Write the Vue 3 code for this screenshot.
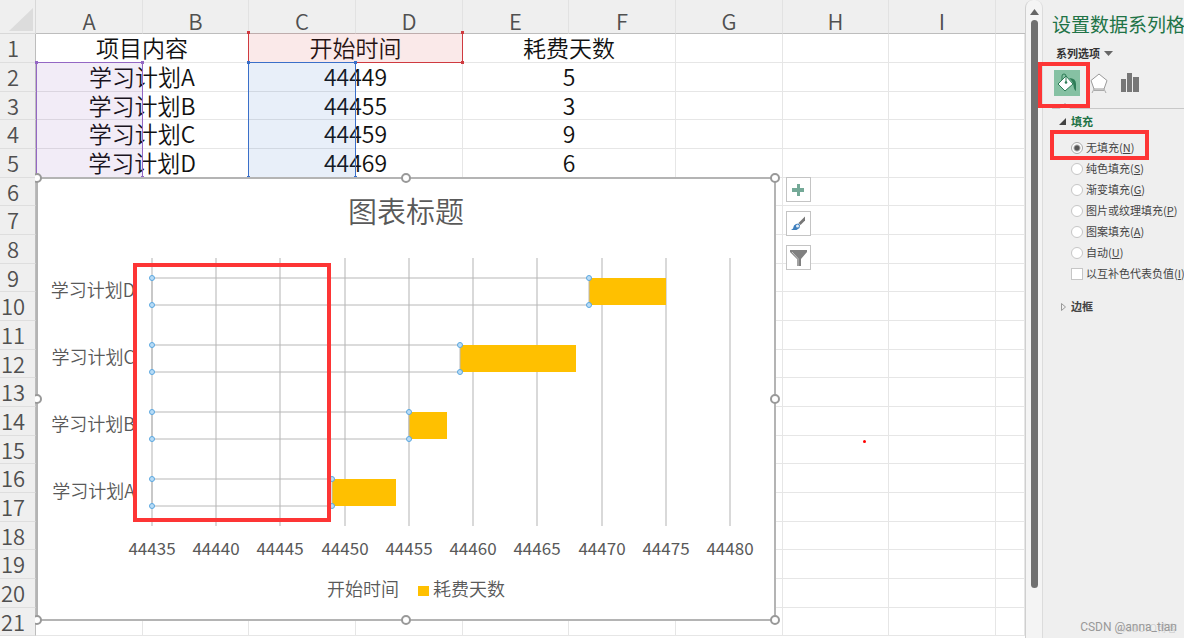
<script setup>
const columns = ['A', 'B', 'C', 'D', 'E', 'F', 'G', 'H', 'I']
const tableRows = [
  ['项目内容', '开始时间', '耗费天数'],
  ['学习计划A', '44449', '5'],
  ['学习计划B', '44455', '3'],
  ['学习计划C', '44459', '9'],
  ['学习计划D', '44469', '6'],
]
const emptyRows = Array.from({ length: 16 }, (_, i) => i + 6)

const origin = 152
const ticks = Array.from({ length: 10 }, (_, i) => 44435 + i * 5)
const xOf = (v) => Math.round(origin + ((v - 44435) * 578) / 45)
const tasks = [
  { name: '学习计划D', start: 44469, days: 6, y: 278 },
  { name: '学习计划C', start: 44459, days: 9, y: 345 },
  { name: '学习计划B', start: 44455, days: 3, y: 412 },
  { name: '学习计划A', start: 44449, days: 5, y: 479 },
]
const handles = [
  [37, 178], [406, 178], [775, 178], [37, 399], [775, 399], [37, 620], [406, 620], [775, 620],
]
const fills = [
  ['无填充', 'N'], ['纯色填充', 'S'], ['渐变填充', 'G'], ['图片或纹理填充', 'P'], ['图案填充', 'A'], ['自动', 'U'],
]
</script>

<template>
  <div class="app">
    <main class="sheet">
      <table>
        <colgroup>
          <col class="c-head" />
          <col v-for="c in columns" :key="c" :class="['B', 'E', 'H'].includes(c) ? 'c-narrow' : 'c-wide'" />
          <col />
        </colgroup>
        <thead>
          <tr>
            <th class="corner"><svg width="35" height="33" aria-hidden="true"><path d="M9 31H33V8Z" fill="#dcdcdc" /></svg></th>
            <th v-for="c in columns" :key="c" scope="col">{{ c }}</th>
            <th></th>
          </tr>
        </thead>
        <tbody>
          <tr v-for="(row, i) in tableRows" :key="i">
            <th scope="row">{{ i + 1 }}</th>
            <td v-for="(cell, j) in row" :key="j" colspan="2">{{ cell }}</td>
            <td></td><td></td><td></td><td></td>
          </tr>
          <tr v-for="n in emptyRows" :key="n">
            <th scope="row">{{ n }}</th>
            <td v-for="k in 10" :key="k"></td>
          </tr>
        </tbody>
      </table>

      <div class="range names"><i></i><i></i><i></i><i></i></div>
      <div class="range header"><i></i><i></i><i></i><i></i></div>
      <div class="range values"><i></i><i></i><i></i><i></i></div>

      <svg class="chart" width="748" height="456" viewBox="35 172 748 456" role="img" aria-label="图表标题">
        <rect x="37" y="178" width="738" height="442" fill="#fff" stroke="#b4b4b4" stroke-width="2" />
        <text class="title" x="406" y="223">图表标题</text>
        <rect v-for="t in ticks" :key="t" :x="xOf(t) - 1" y="258" width="2" height="268" fill="#d9d9d9" />
        <g v-for="t in tasks" :key="t.name">
          <text class="category" x="135" :y="t.y + 19">{{ t.name }}</text>
          <rect :x="xOf(t.start)" :y="t.y" :width="xOf(t.start + t.days) - xOf(t.start)" height="27" fill="#ffc000" />
          <rect class="ghost" :x="origin" :y="t.y" :width="xOf(t.start) - origin" height="27" />
          <g class="dots">
            <circle :cx="origin" :cy="t.y" r="2.5" />
            <circle :cx="origin" :cy="t.y + 27" r="2.5" />
            <circle :cx="xOf(t.start)" :cy="t.y" r="2.5" />
            <circle :cx="xOf(t.start)" :cy="t.y + 27" r="2.5" />
          </g>
        </g>
        <text v-for="t in ticks" :key="t" class="tick" :x="xOf(t)" y="555">{{ t }}</text>
        <text class="legend" x="327" y="596">开始时间</text>
        <rect x="418" y="586" width="11" height="10" fill="#ffc000" />
        <text class="legend" x="433" y="596">耗费天数</text>
        <circle v-for="(h, i) in handles" :key="i" :cx="h[0]" :cy="h[1]" r="4" fill="#fff" stroke="#999" stroke-width="2" />
        <rect x="135" y="265" width="194" height="255" fill="none" stroke="#fd3535" stroke-width="4" />
      </svg>

      <div class="chart-tools">
        <button type="button" aria-label="图表元素">
          <svg width="23" height="23"><path d="M10 6h3v4h4v4h-4v4h-3v-4H5v-4h5z" fill="#74a997" /></svg>
        </button>
        <button type="button" aria-label="图表样式">
          <svg width="23" height="23"><path d="M18 4.500V8.500L13.500 13 11.500 11Z" fill="#777" /><path d="M9 12l2.500-.500 1.500 1.500-.500 3-3 2H4l2-1.500 1-3z" fill="#3f7fbd" /><circle cx="10.500" cy="14" r="1.500" fill="#e4eef8" /></svg>
        </button>
        <button type="button" aria-label="图表筛选器">
          <svg width="23" height="23"><path d="M3 4H20V6L14 13V20H10V13L3 6Z" fill="#808080" /><path d="M5 6l6 6.500V20" fill="none" stroke="#c4c4c4" /></svg>
        </button>
      </div>
      <span class="dot"></span>
    </main>

    <div class="scroll">
      <svg width="9" height="6" aria-hidden="true"><path d="M0 6L4.500 0 9 6Z" fill="#666" /></svg>
      <div class="thumb"></div>
    </div>

    <aside>
      <h1>设置数据系列格</h1>
      <button type="button" class="series">系列选项<svg width="9" height="5" aria-hidden="true"><path d="M0 0H9L4.500 5Z" fill="#666" /></svg></button>
      <nav>
        <button type="button" class="on" aria-label="填充与线条">
          <svg width="26" height="26"><path d="M8 10V6q0-2 2-2t2 2v3" fill="none" stroke="#2e7d57" /><path d="M4 14L12 6 19 14 11 21Z" fill="#fff" stroke="#2e7d57" /><path d="M12 6v6" stroke="#2e7d57" /><circle cx="12" cy="12.500" r="1.300" fill="#2e7d57" /><path d="M15 8q7 0 7 6v7q-2-1-2.500-5 0-4-4.500-8z" fill="#2e7d57" /></svg>
        </button>
        <button type="button" aria-label="效果">
          <svg width="18" height="21"><path d="M9 1L17 7.500 14 16H4L1 7.500Z" fill="#fff" stroke="#999" /><path d="M4 16L2 20M14 16l2 4M4 17.500H14" fill="none" stroke="#aaa" /></svg>
        </button>
        <button type="button" aria-label="系列选项">
          <svg width="18" height="21"><path d="M0 6H5V19H0ZM6 0H11V19H6ZM12 4H18V19H12Z" fill="#777" /></svg>
        </button>
        <span class="mark fill-mark"></span>
      </nav>
      <svg class="rule" width="132" height="8" aria-hidden="true"><path d="M0 7.500H8L13 2 18 7.500H132" fill="none" stroke="#c8c8c8" /></svg>
      <section>
        <h2 class="green"><svg width="8" height="8" aria-hidden="true"><path d="M7 0V7H0Z" fill="#444" /></svg>填充</h2>
        <div class="options">
          <label v-for="(f, i) in fills" :key="f[1]">
            <input type="radio" name="fill" :checked="i === 0" /><span>{{ f[0] }}(<u>{{ f[1] }}</u>)</span>
          </label>
          <label><input type="checkbox" /><span>以互补色代表负值(<u>I</u>)</span></label>
          <span class="mark none-mark"></span>
        </div>
        <h2 class="border-head"><svg width="8" height="8" aria-hidden="true"><path d="M2.500 .500L6.500 4 2.500 7.500Z" fill="none" stroke="#999" /></svg>边框</h2>
      </section>
      <p class="credit">CSDN @anna_tian<span>@51CTO博客</span></p>
    </aside>
  </div>
</template>

<style>
body { background: #efefef; overflow: hidden; }
</style>

<style scoped>
* { box-sizing: border-box; }
.app {
  display: flex;
  min-height: 100vh;
  font-family: "Noto Sans CJK SC", "Noto Sans", sans-serif;
  background: #efefef;
}
button { padding: 0; border: 0; background: none; font: inherit; }
svg { display: block; flex: none; }
.sheet { position: relative; flex: 1; min-width: 0; background: #fff; }
table { width: 100%; table-layout: fixed; border-collapse: separate; border-spacing: 0; }
.c-head { width: 36px; }
.c-wide { width: 107px; }
.c-narrow { width: 106px; }
th, td { height: 29px; padding: 0 0 2px; line-height: 24px; font-weight: 350; text-align: center; white-space: nowrap; }
tbody tr:nth-child(3n) > * { height: 28px; }
th { background: #efefef; color: #505050; font-size: 22px; }
thead th { height: 34px; padding: 6px 0 0; border-right: 1px solid #e2e2e2; border-bottom: 1px solid #bdbdbd; }
thead .corner { padding: 0; border-color: #d8d8d8; }
thead th:last-child { border-right: 0; }
tbody th { border-right: 1px solid #bdbdbd; border-bottom: 1px solid #dedede; padding-right: 9px; }
td { border-right: 1px solid #e6e6e6; border-bottom: 1px solid #e6e6e6; color: #111; font-size: 23px; }

.range { position: absolute; border: 1px solid; }
.names { left: 36px; top: 62px; width: 107px; height: 116px; color: #9467c4; background: rgba(112, 48, 170, .09); }
.header { left: 248px; top: 33px; width: 215px; height: 30px; color: #cf3a40; border-top: 0; background: rgba(210, 40, 40, .1); }
.values { left: 248px; top: 62px; width: 108px; height: 116px; color: #3a6fc9; background: rgba(50, 110, 200, .11); }
.range i { position: absolute; width: 3px; height: 3px; background: currentColor; }
.range i:nth-child(1) { left: -2px; top: -2px; }
.range i:nth-child(2) { right: -2px; top: -2px; }
.range i:nth-child(3) { left: -2px; bottom: -2px; }
.range i:nth-child(4) { right: -2px; bottom: -2px; }

.chart { position: absolute; left: 35px; top: 172px; fill: #595959; }
.title { font-size: 29px; font-weight: 350; text-anchor: middle; }
.category { font-size: 18px; font-weight: 350; text-anchor: end; }
.tick { font-size: 17px; text-anchor: middle; }
.legend { font-size: 18px; font-weight: 350; }
.ghost { fill: none; stroke: #b8b8b8; }
.dots { fill: #b9dcf6; stroke: #5aa7e0; }
.chart-tools { position: absolute; left: 786px; top: 177px; display: flex; flex-direction: column; gap: 9px; }
.chart-tools button { width: 25px; height: 25px; border: 1px solid #c4c4c4; background: #fff; }
.dot { position: absolute; left: 863px; top: 440px; width: 3px; height: 3px; border-radius: 50%; background: #f00; }

.scroll {
  flex: none;
  width: 18px;
  display: flex;
  flex-direction: column;
  align-items: center;
  gap: 5px;
  padding: 9px 0 50px;
  border-left: 1px solid #cfcfcf;
  border-right: 1px solid #dcdcdc;
  border-radius: 8px 8px 0 0;
  background: #f4f4f4;
}
.thumb { flex: 1; width: 7px; border-radius: 4px; background: #707070; }

aside { position: relative; flex: none; width: 141px; padding: 11px 0 0 9px; color: #444; font-size: 11px; line-height: 21px; }
h1 { margin: 0; overflow: hidden; color: #217346; font-size: 19px; font-weight: 400; line-height: 26px; white-space: nowrap; }
.series { display: flex; align-items: center; gap: 4px; margin: 6px 0 0 4px; height: 21px; font-weight: 700; color: #333; }
nav { position: relative; display: flex; align-items: center; height: 26px; margin: 6px 0 5px 2px; }
nav .on { width: 26px; height: 26px; margin-right: 10px; background: #86c1a3; }
nav button + button + button { margin-left: 13px; }
.mark { position: absolute; border: 4px solid #fd3535; pointer-events: none; }
.fill-mark { left: -16px; top: -8px; width: 52px; height: 46px; }
section { padding-left: 7px; }
h2 { display: flex; align-items: center; gap: 4px; margin: 2px 0 5px; font-size: 11px; font-weight: 700; line-height: 21px; }
h2.green { color: #217346; }
.options { position: relative; padding-left: 12px; }
label { display: flex; align-items: center; gap: 3px; height: 21px; white-space: nowrap; }
input { appearance: none; flex: none; width: 12px; height: 12px; margin: 0; border: 1px solid #c6c6c6; background: #fff; }
input[type="radio"] { border-radius: 50%; }
input[type="radio"]:checked { background: radial-gradient(circle, #555 0 2px, #fff 4px); border-color: #aaa; }
.none-mark { left: -9px; top: -7px; width: 99px; height: 30px; }
.border-head { margin-top: 12px; }
.credit { position: absolute; right: 7px; bottom: 0; margin: 0; font-family: Roboto, "Liberation Sans", sans-serif; font-size: 12px; color: #999; white-space: nowrap; }
.credit span { position: absolute; right: 0; top: 0; color: rgba(150, 150, 150, .35); font-family: "Noto Sans CJK SC", sans-serif; font-size: 10px; }
</style>
